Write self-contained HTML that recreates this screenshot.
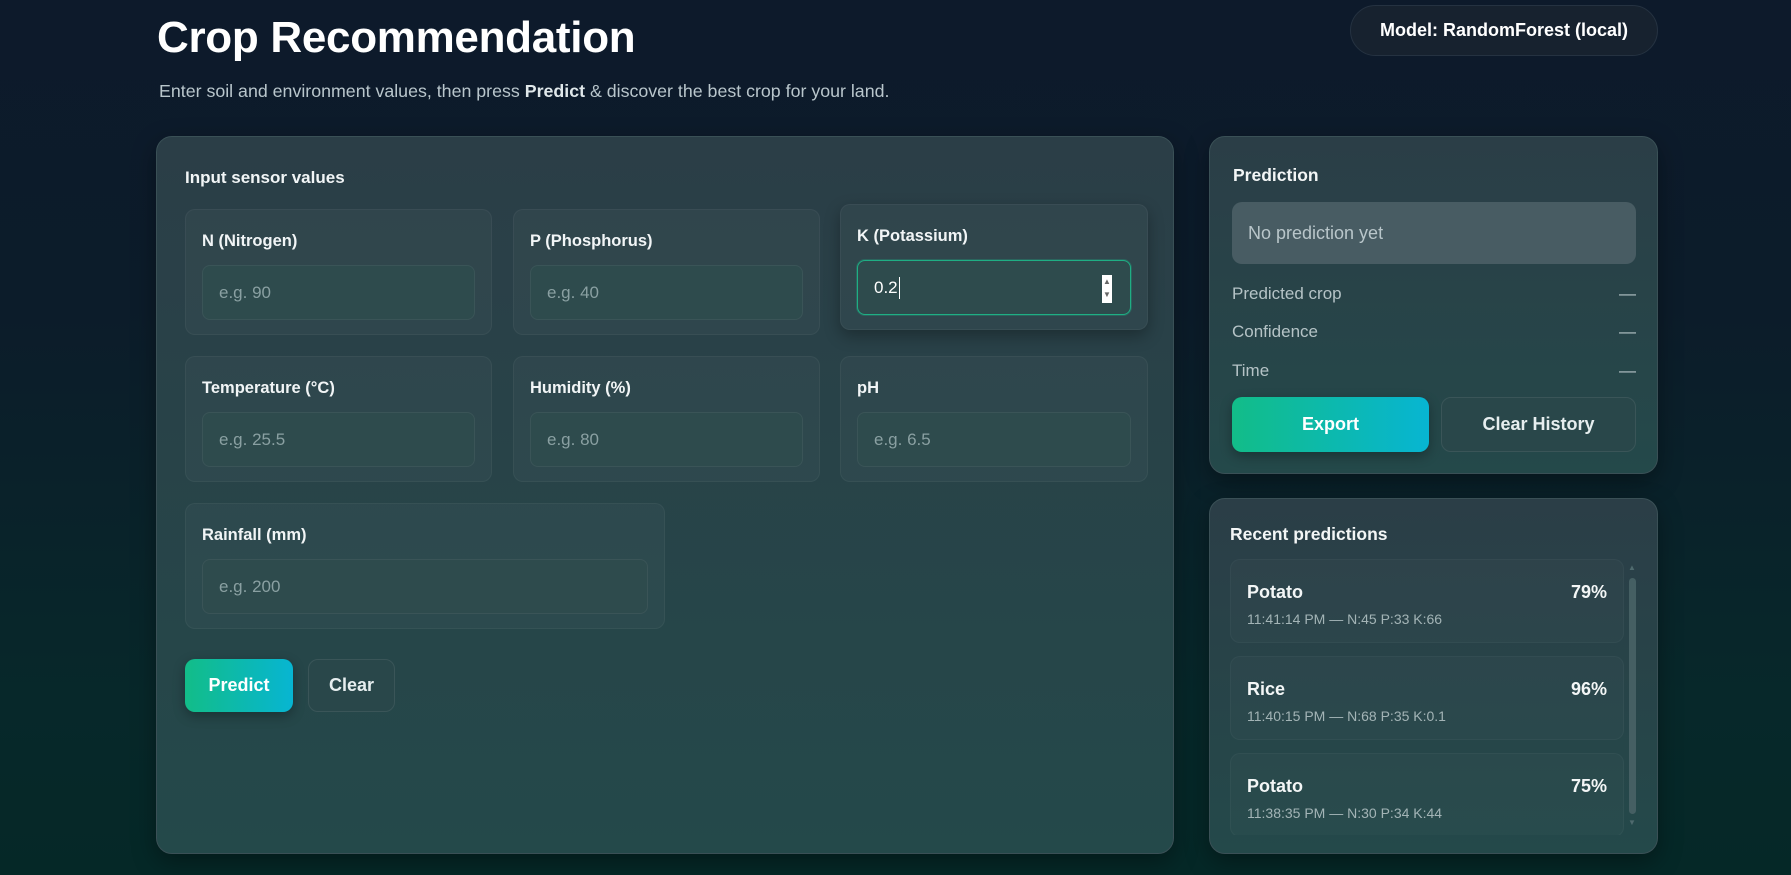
<!DOCTYPE html>
<html><head><meta charset="utf-8"><style>
*{box-sizing:border-box;margin:0;padding:0}
html,body{width:1791px;height:875px;overflow:hidden}
body{font-family:"Liberation Sans",sans-serif;background:linear-gradient(180deg,#0d1a2b 0%,#0c1c2a 35%,#07282a 80%,#052827 100%);color:#e8eef0;position:relative}
.abs{position:absolute}
h1{position:absolute;left:157px;top:13px;font-size:44px;font-weight:bold;color:#fff;letter-spacing:-0.3px}
.sub{left:159px;top:81px;font-size:17.8px;color:#b9c6cc}
.sub b{color:#dfe7ea}
.pill{left:1350px;top:5px;width:308px;height:51px;border-radius:26px;background:#17222f;border:1px solid #253241;font-weight:bold;font-size:18px;color:#fff;display:flex;align-items:center;justify-content:center}
.card{border-radius:16px;background:linear-gradient(180deg,#2b3e47,#24494a);border:1px solid #3a5056;box-shadow:0 8px 24px rgba(0,0,0,.35)}
.field{border-radius:10px;background:rgba(255,255,255,0.03);border:1px solid rgba(255,255,255,0.045)}
.field .lab{position:absolute;left:16px;top:22px;font-size:16.5px;font-weight:bold;color:#f1f5f6}
.inp{position:absolute;left:16px;right:16px;top:55px;height:55px;border-radius:8px;background:#2e4b4d;border:1px solid #3a5457;font-size:17px;color:#8aa0a2;padding-left:16px;display:flex;align-items:center}
.btn{border-radius:10px;font-weight:bold;font-size:18px;display:flex;align-items:center;justify-content:center;color:#fff}
.grad{background:linear-gradient(90deg,#12bd88,#07b5d2);box-shadow:0 4px 12px rgba(0,0,0,.3)}
.ghost{background:#29474a;border:1px solid #3a5558;color:#e6eeef}
.row{left:1232px;width:404px;font-size:17px;color:#b5c3c6;display:flex;justify-content:space-between}
.item{left:1230px;width:394px;height:84px;border-radius:10px;background:rgba(255,255,255,0.02);border:1px solid rgba(255,255,255,0.035)}
.item .n{position:absolute;left:16px;top:22px;font-size:18px;font-weight:bold;color:#f3f6f6}
.item .p{position:absolute;right:16px;top:22px;font-size:18px;font-weight:bold;color:#f3f6f6}
.item .t{position:absolute;left:16px;top:51px;font-size:14px;color:#a3b4b6}
</style></head><body>
<h1>Crop Recommendation</h1>
<div class="abs sub">Enter soil and environment values, then press <b>Predict</b> &amp; discover the best crop for your land.</div>
<div class="abs pill">Model: RandomForest (local)</div>

<div class="abs card" style="left:156px;top:136px;width:1018px;height:718px"></div>
<div class="abs" style="left:185px;top:168px;font-size:17px;font-weight:bold;color:#f1f5f6">Input sensor values</div>

<div class="abs field" style="left:185px;top:209px;width:307px;height:126px"><div class="lab">N (Nitrogen)</div><div class="inp">e.g. 90</div></div>
<div class="abs field" style="left:513px;top:209px;width:307px;height:126px"><div class="lab">P (Phosphorus)</div><div class="inp">e.g. 40</div></div>
<div class="abs field" style="left:840px;top:204px;width:308px;height:126px;box-shadow:0 6px 16px rgba(0,0,0,.3)"><div class="lab">K (Potassium)</div><div class="inp" style="border-color:#1fae84;color:#fff;box-shadow:0 0 0 1px rgba(31,174,132,.3)">0.2<span style="display:inline-block;width:1.5px;height:22px;background:#fff;margin-left:1px"></span>
<span style="position:absolute;right:18px;top:14px;width:10px;height:28px;background:#fff;font-size:8px;color:#666;line-height:13px;text-align:center">▲<br>▼</span></div></div>

<div class="abs field" style="left:185px;top:356px;width:307px;height:126px"><div class="lab">Temperature (°C)</div><div class="inp">e.g. 25.5</div></div>
<div class="abs field" style="left:513px;top:356px;width:307px;height:126px"><div class="lab">Humidity (%)</div><div class="inp">e.g. 80</div></div>
<div class="abs field" style="left:840px;top:356px;width:308px;height:126px"><div class="lab">pH</div><div class="inp">e.g. 6.5</div></div>
<div class="abs field" style="left:185px;top:503px;width:480px;height:126px"><div class="lab">Rainfall (mm)</div><div class="inp">e.g. 200</div></div>

<div class="abs btn grad" style="left:185px;top:659px;width:108px;height:53px">Predict</div>
<div class="abs btn ghost" style="left:308px;top:659px;width:87px;height:53px">Clear</div>

<div class="abs card" style="left:1209px;top:136px;width:449px;height:338px"></div>
<div class="abs" style="left:1233px;top:165px;font-size:17.5px;font-weight:bold;color:#f3f6f6">Prediction</div>
<div class="abs" style="left:1232px;top:202px;width:404px;height:62px;border-radius:10px;background:#485c63;font-size:18px;color:#b9c6ca;padding-left:16px;display:flex;align-items:center">No prediction yet</div>
<div class="abs row" style="top:284px"><span>Predicted crop</span><span>—</span></div>
<div class="abs row" style="top:322px"><span>Confidence</span><span>—</span></div>
<div class="abs row" style="top:361px"><span>Time</span><span>—</span></div>
<div class="abs btn grad" style="left:1232px;top:397px;width:197px;height:55px">Export</div>
<div class="abs btn ghost" style="left:1441px;top:397px;width:195px;height:55px">Clear History</div>

<div class="abs card" style="left:1209px;top:498px;width:449px;height:356px"></div>
<div class="abs" style="left:1230px;top:524px;font-size:17.5px;font-weight:bold;color:#f3f6f6">Recent predictions</div>
<div class="abs" style="left:1228px;top:558px;width:412px;height:277px;overflow:hidden">
 <div class="abs item" style="left:2px;top:1px"><div class="n">Potato</div><div class="p">79%</div><div class="t">11:41:14 PM — N:45 P:33 K:66</div></div>
 <div class="abs item" style="left:2px;top:98px"><div class="n">Rice</div><div class="p">96%</div><div class="t">11:40:15 PM — N:68 P:35 K:0.1</div></div>
 <div class="abs item" style="left:2px;top:195px"><div class="n">Potato</div><div class="p">75%</div><div class="t">11:38:35 PM — N:30 P:34 K:44</div></div>
</div>
<div class="abs" style="left:1629px;top:578px;width:7px;height:236px;border-radius:4px;background:#455f63"></div>
<div class="abs" style="left:1628px;top:563px;font-size:8px;color:#4f6a6e">▲</div>
<div class="abs" style="left:1628px;top:818px;font-size:8px;color:#4f6a6e">▼</div>
</body></html>
